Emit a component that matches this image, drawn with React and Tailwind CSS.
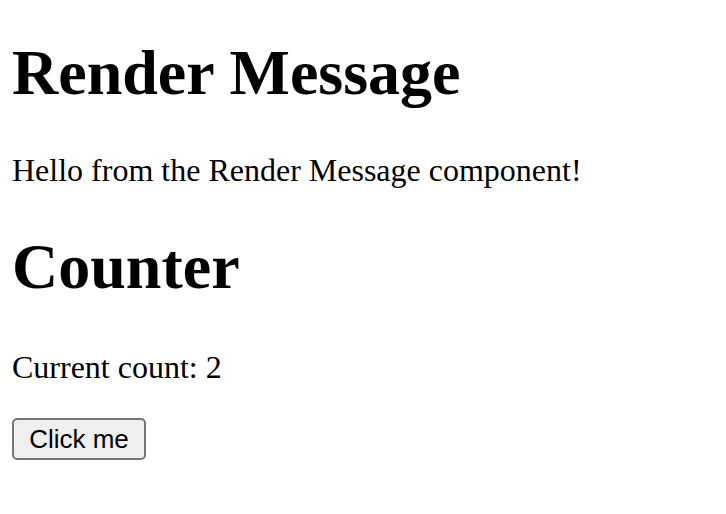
import { useState } from "react";

function RenderMessage() {
  return (
    <div>
      <h1 className="mt-[36px] mb-[42px] text-[64px] leading-[74px] font-bold">
        Render Message
      </h1>
      <p className="mb-[41px] text-[32px] leading-[37px]">
        Hello from the Render Message component!
      </p>
    </div>
  );
}

function Counter() {
  const [count, setCount] = useState(2);

  return (
    <div>
      <h1 className="mb-[45px] text-[64px] leading-[74px] font-bold">Counter</h1>
      <p className="mb-[32px] text-[32px] leading-[37px]">
        Current count: {count}
      </p>
      <button
        onClick={() => setCount(count + 1)}
        className="flex items-center justify-center w-[134px] h-[42px] border-2 border-[#767676] rounded-[5px] bg-[#efefef] text-[26px] text-black font-['Liberation_Sans',Arial,sans-serif]"
      >
        Click me
      </button>
    </div>
  );
}

export default function App() {
  return (
    <div className="flow-root min-h-[514px] bg-white px-[12px] text-black font-['Liberation_Serif','Times_New_Roman',serif]">
      <RenderMessage />
      <Counter />
    </div>
  );
}
